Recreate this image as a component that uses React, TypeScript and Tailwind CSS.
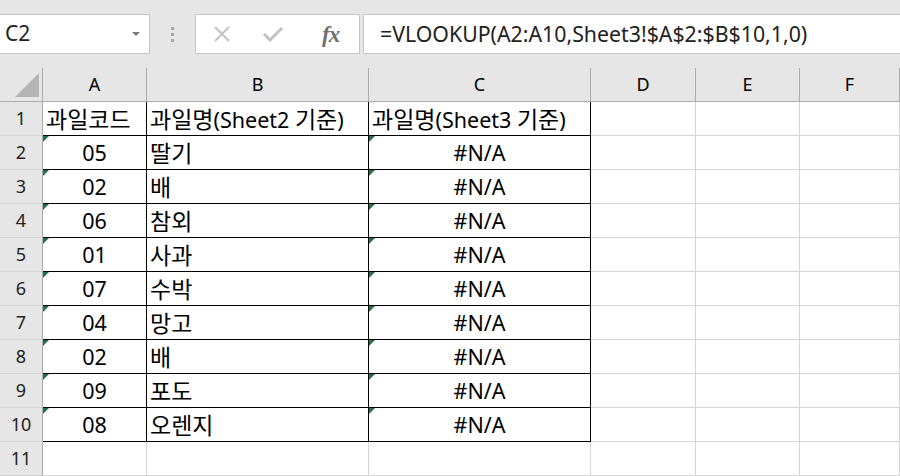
import React from 'react';

const font = "font-['Noto_Sans','Noto_Sans_CJK_KR',sans-serif]";

const colWidths = ['w-[104px]', 'w-[222px]', 'w-[222px]', 'w-[105px]', 'w-[104px]', 'flex-1'];
const colNames = ['A', 'B', 'C', 'D', 'E', 'F'];

const data: [string, string][] = [
  ['05', '딸기'],
  ['02', '배'],
  ['06', '참외'],
  ['01', '사과'],
  ['07', '수박'],
  ['04', '망고'],
  ['02', '배'],
  ['09', '포도'],
  ['08', '오렌지'],
];

// hangul runs render a bit wider, like Malgun Gothic
const Txt = ({ s }: { s: string }) => {
  const parts = s.split(/([\uac00-\ud7a3]+)/).filter(Boolean);
  return (
    <>
      {parts.map((p, i) =>
        /[\uac00-\ud7a3]/.test(p) ? (
          <span key={i} className="font-['Noto_Sans_CJK_KR',sans-serif] text-[23px]">
            {p}
          </span>
        ) : (
          <span key={i}>{p}</span>
        )
      )}
    </>
  );
};

const Flag = () => (
  <span className="absolute left-0 top-0 h-0 w-0 border-t-[6px] border-r-[6px] border-t-[#217346] border-r-transparent" />
);

type CellProps = {
  w: string;
  text?: string;
  align?: 'left' | 'center';
  boxed?: boolean;
  flag?: boolean;
};

const Cell = ({ w, text, align = 'left', boxed, flag }: CellProps) => (
  <div
    className={`relative flex h-full shrink-0 items-center border-r border-b text-[21.5px] text-black ${w} ${
      boxed ? 'border-black' : 'border-[#d4d4d4]'
    } ${align === 'center' ? 'justify-center' : 'pl-[3px]'}`}
  >
    {flag && <Flag />}
    {text && (
      <span className="whitespace-nowrap leading-none">
        <Txt s={text} />
      </span>
    )}
  </div>
);

const RowHead = ({ n }: { n: number }) => (
  <div className="flex h-full w-[43px] shrink-0 items-center justify-center border-r border-b border-r-[#ababab] border-b-[#d4d4d4] bg-[#e6e6e6] text-[18px] text-[#222]">
    {n}
  </div>
);

export default function App() {
  return (
    <div className={`h-[476px] w-[900px] overflow-hidden bg-white ${font}`}>
      {/* formula bar */}
      <div className="flex h-[68px] items-center bg-[#e6e6e6]">
        <div className="relative flex h-[40px] w-[150px] items-center border border-l-0 border-[#c6c6c6] bg-white pl-[5px] text-[21px] text-[#222]">
          C2
          <span className="absolute right-[9px] top-[17px] h-0 w-0 border-x-[4px] border-t-[4px] border-x-transparent border-t-[#7a7a7a]" />
        </div>
        <div className="flex w-[45px] flex-col items-center gap-[3px]">
          <span className="h-[3px] w-[3px] bg-[#a6a6a6]" />
          <span className="h-[3px] w-[3px] bg-[#a6a6a6]" />
          <span className="h-[3px] w-[3px] bg-[#a6a6a6]" />
        </div>
        <div className="flex h-[40px] w-[165px] items-center border border-[#c6c6c6] bg-white">
          <svg width="54" height="20" viewBox="0 0 54 20" className="shrink-0">
            <path d="M19 3 L33 17 M33 3 L19 17" stroke="#c2c2c2" strokeWidth="2" fill="none" />
          </svg>
          <svg width="46" height="20" viewBox="0 0 46 20" className="shrink-0">
            <path d="M14 10 L20 16 L32 4" stroke="#c2c2c2" strokeWidth="3" fill="none" />
          </svg>
          <span className="ml-[26px] font-['Liberation_Serif',serif] text-[23px] font-bold italic leading-none text-[#6f6f6f]">
            <span className="tracking-[-1px]">f</span>x
          </span>
        </div>
        <div className="ml-[3px] flex h-[40px] flex-1 items-center border border-r-0 border-[#c6c6c6] bg-white pl-[16px] text-[21.3px] text-[#222]">
          =VLOOKUP(A2:A10,Sheet3!$A$2:$B$10,1,0)
        </div>
      </div>

      {/* column header */}
      <div className="flex h-[34px] border-b border-[#ababab] bg-[#e6e6e6]">
        <div className="relative h-full w-[43px] shrink-0 border-r border-[#ababab]">
          <span className="absolute bottom-[4px] right-[3px] h-0 w-0 border-b-[24px] border-l-[24px] border-b-[#b4b4b4] border-l-transparent" />
        </div>
        {colNames.map((c, i) => (
          <div
            key={c}
            className={`flex h-full shrink-0 items-center justify-center border-r border-[#ababab] text-[18px] text-black ${colWidths[i]}`}
          >
            {c}
          </div>
        ))}
      </div>

      {/* row 1 */}
      <div className="flex h-[34px]">
        <RowHead n={1} />
        <Cell w={colWidths[0]} boxed text="과일코드" />
        <Cell w={colWidths[1]} boxed text="과일명(Sheet2 기준)" />
        <Cell w={colWidths[2]} boxed text="과일명(Sheet3 기준)" />
        <Cell w={colWidths[3]} />
        <Cell w={colWidths[4]} />
        <Cell w={colWidths[5]} />
      </div>

      {data.map(([code, name], i) => (
        <div key={i} className="flex h-[34px]">
          <RowHead n={i + 2} />
          <Cell w={colWidths[0]} boxed flag align="center" text={code} />
          <Cell w={colWidths[1]} boxed text={name} />
          <Cell w={colWidths[2]} boxed flag align="center" text="#N/A" />
          <Cell w={colWidths[3]} />
          <Cell w={colWidths[4]} />
          <Cell w={colWidths[5]} />
        </div>
      ))}

      {/* row 11 */}
      <div className="flex h-[34px]">
        <RowHead n={11} />
        {colWidths.map((w, i) => (
          <Cell key={i} w={w} />
        ))}
      </div>
    </div>
  );
}
